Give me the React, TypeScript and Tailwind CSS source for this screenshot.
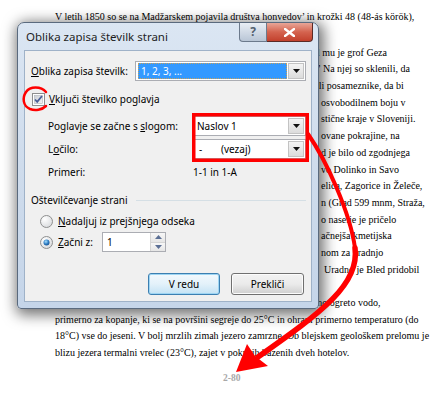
import React from "react";

const SERIF = "font-['Liberation_Serif','Times_New_Roman',serif]";
const UI = "font-['Noto_Sans','Segoe_UI',sans-serif]";

const TOP_LINE =
  "V letih 1850 so se na Madžarskem pojavila društva honvedov’ in krožki 48 (48-ás körök),";

const BODY_LINES: { text: string; pad: string }[] = [
  { text: "l mu je grof Geza", pad: "pl-[317px]" },
  { text: "” Na njej so sklenili, da", pad: "pl-[316px]" },
  { text: "ili posameznike, da bi", pad: "pl-[316px]" },
  { text: "osvobodilnem boju v", pad: "pl-[321px]" },
  { text: "stične kraje v Sloveniji.", pad: "pl-[321px]" },
  { text: "ovane pokrajine, na", pad: "pl-[321px]" },
  { text: "d je bilo od zgodnjega", pad: "pl-[321px]" },
  { text: "vo Dolinko in Savo", pad: "pl-[321px]" },
  { text: "elica, Zagorice in Želeče,", pad: "pl-[321px]" },
  { text: "n (Grad 599 mnm, Straža,", pad: "pl-[321px]" },
  { text: "o naselje je pričelo", pad: "pl-[321px]" },
  { text: "ačnejša kmetijska", pad: "pl-[321px]" },
  { text: "nom za gradnjo", pad: "pl-[321px]" },
  { text: "Uradno je Bled pridobil", pad: "pl-[324px]" },
  { text: "", pad: "pl-[55px]" },
  { text: "rno ogreto vodo,", pad: "pl-[314px]" },
  {
    text: "primerno za kopanje, ki se na površini segreje do 25°C in ohrani primerno temperaturo (do",
    pad: "pl-[55px]",
  },
  {
    text: "18°C) vse do jeseni. V bolj mrzlih zimah jezero zamrzne. Ob blejskem geološkem prelomu je",
    pad: "pl-[55px]",
  },
  {
    text: "blizu jezera termalni vrelec (23°C), zajet v pokritih bazenih dveh hotelov.",
    pad: "pl-[55px]",
  },
];

function DocumentPage() {
  return (
    <div className={`${SERIF} flex flex-col pt-[9px] text-[10px] leading-[16.7px] text-black`}>
      <div className="h-[16.7px] whitespace-nowrap pl-[55px]">{TOP_LINE}</div>
      <div className="mt-[19px] flex flex-col">
        {BODY_LINES.map((l, i) => (
          <div key={i} className={`h-[16.7px] whitespace-nowrap ${l.pad}`}>
            {l.text}
          </div>
        ))}
      </div>
      <div className="mt-[8px] pl-[223px] text-[9.5px] font-bold text-[#a8a8a8]">2-80</div>
    </div>
  );
}

function DropArrow() {
  return (
    <div className="m-[1px] flex w-[16px] items-center justify-center border border-[#c3c3c3] bg-linear-to-b from-[#f4f4f4] to-[#dcdcdc]">
      <svg width="7" height="4" viewBox="0 0 7 4">
        <path d="M0 0h7L3.5 4z" fill="#111" />
      </svg>
    </div>
  );
}

function Combo({ children, className = "" }: { children: React.ReactNode; className?: string }) {
  return (
    <div className={`flex h-[20px] border border-[#abadb3] bg-white ${className}`}>
      <div className="flex min-w-0 flex-1 items-center pl-[2px]">{children}</div>
      <DropArrow />
    </div>
  );
}

function Checkbox() {
  return (
    <svg width="13" height="13" viewBox="0 0 13 13">
      <defs>
        <linearGradient id="cb" x1="0" y1="0" x2="1" y2="1">
          <stop offset="0" stopColor="#cbcfd5" />
          <stop offset="1" stopColor="#f6f6f6" />
        </linearGradient>
      </defs>
      <rect x="0.5" y="0.5" width="12" height="12" fill="#fff" stroke="#8e8f8f" />
      <rect x="2.5" y="2.5" width="8" height="8" fill="url(#cb)" stroke="#b0b4b9" strokeWidth="0.6" />
      <path d="M3 6.5l2.2 2.3L10 3" fill="none" stroke="#4a5f97" strokeWidth="1.8" />
    </svg>
  );
}

function Radio({ on }: { on?: boolean }) {
  return (
    <svg width="13" height="13" viewBox="0 0 13 13">
      <defs>
        <radialGradient id="rb" cx="0.35" cy="0.3" r="0.8">
          <stop offset="0" stopColor="#ffffff" />
          <stop offset="1" stopColor="#d6d8db" />
        </radialGradient>
        <radialGradient id="rd" cx="0.4" cy="0.35" r="0.7">
          <stop offset="0" stopColor="#a6e0ff" />
          <stop offset="0.6" stopColor="#2d7bc2" />
          <stop offset="1" stopColor="#17508a" />
        </radialGradient>
      </defs>
      <circle cx="6.5" cy="6.5" r="6" fill="url(#rb)" stroke="#8e8f8f" />
      {on && <circle cx="6.5" cy="6.5" r="3" fill="url(#rd)" />}
    </svg>
  );
}

function Spinner() {
  return (
    <div className="flex h-[20px] w-[64px] border border-[#abadb3] bg-white">
      <div className="flex flex-1 items-center pl-[4px]">1</div>
      <div className="flex w-[15px] flex-col border-l border-[#d5d5d5]">
        <div className="flex flex-1 items-center justify-center border-b border-[#d5d5d5] bg-linear-to-b from-[#f7f7f7] to-[#e6e6e6]">
          <svg width="7" height="4" viewBox="0 0 7 4">
            <path d="M0 4h7L3.5 0z" fill="#5b6f95" />
          </svg>
        </div>
        <div className="flex flex-1 items-center justify-center bg-linear-to-b from-[#f7f7f7] to-[#e6e6e6]">
          <svg width="7" height="4" viewBox="0 0 7 4">
            <path d="M0 0h7L3.5 4z" fill="#5b6f95" />
          </svg>
        </div>
      </div>
    </div>
  );
}

function U({ children }: { children: React.ReactNode }) {
  return <span className="underline underline-offset-[1px]">{children}</span>;
}

function Dialog() {
  return (
    <div
      className={`${UI} absolute left-[17px] top-[22px] flex h-[287px] w-[302px] flex-col rounded-t-[7px] rounded-b-[4px] border border-[#5a6a7e] bg-linear-to-b from-[#dbe6f3] via-[#cfdcec] to-[#c5d5e9] px-[6px] pb-[6px] shadow-[2px_3px_14px_3px_rgba(0,0,0,0.55)]`}
    >
      <div className="flex h-[27px] shrink-0">
        <div className="flex items-center pl-[2px] pt-[1px] text-[11.5px] text-[#1e1e1e]">
          Oblika zapisa številk strani
        </div>
        <div className="ml-auto mr-[-1px] flex h-[19px]">
          <div className="flex w-[28px] items-center justify-center rounded-bl-[4px] border border-t-0 border-[#6c7a8c] bg-linear-to-b from-[#e9eef5] to-[#b9c6d6] text-[12px] font-bold text-[#52606f]">
            ?
          </div>
          <div className="flex w-[46px] items-center justify-center rounded-br-[4px] border border-l-0 border-t-0 border-[#5a2a26] bg-linear-to-b from-[#e8a597] via-[#d4634f] to-[#c2402c]">
            <svg width="11" height="9" viewBox="0 0 11 9">
              <path d="M1 1l9 7M10 1L1 8" stroke="#fff" strokeWidth="2.4" strokeLinecap="square" />
            </svg>
          </div>
        </div>
      </div>

      <div className="flex flex-1 flex-col border border-[#9fb2c8] bg-[#f0f0f0] pl-[6px] pr-[5px] text-[10px] text-black">
        <div className="mt-[10px] flex h-[20px] items-center">
          <div className="w-[104px]">
            <U>O</U>blika zapisa številk:
          </div>
          <Combo className="flex-1">
            <div className="flex h-[16px] flex-1 items-center border border-dotted border-[#c9a15a] bg-[#3399ff] pl-[2px] text-white">
              1, 2, 3, ...
            </div>
          </Combo>
        </div>

        <div className="mt-[10px] flex h-[16px] items-center gap-[4px] pl-[1px]">
          <Checkbox />
          <span>
            <U>V</U>ključi številko poglavja
          </span>
        </div>

        <div className="mt-[9px] flex h-[20px] items-center pl-[17px]">
          <div className="w-[146px]">
            Poglavje se začne s <U>s</U>logom:
          </div>
          <Combo className="flex-1">Naslov 1</Combo>
        </div>

        <div className="mt-[3px] flex h-[20px] items-center pl-[17px]">
          <div className="w-[146px]">
            L<U>o</U>čilo:
          </div>
          <Combo className="flex-1">
            <span className="w-[24px] pl-[2px]">-</span>
            <span>(vezaj)</span>
          </Combo>
        </div>

        <div className="mt-[6px] flex h-[14px] items-center pl-[17px]">
          <div className="w-[145px]">Primeri:</div>
          <div>1-1 in 1-A</div>
        </div>

        <div className="mt-[14px] flex h-[14px] items-center">
          <span>Oštevilčevanje strani</span>
          <div className="ml-[8px] h-px flex-1 bg-[#d5dfe5]" />
        </div>

        <div className="mt-[7px] flex h-[14px] items-center gap-[5px] pl-[9px]">
          <Radio />
          <span>
            <U>N</U>adaljuj iz prejšnjega odseka
          </span>
        </div>

        <div className="mt-[4px] flex h-[20px] items-center pl-[9px]">
          <Radio on />
          <span className="ml-[5px] w-[44px]">
            <U>Z</U>ačni z:
          </span>
          <Spinner />
        </div>

        <div className="mt-[21px] flex justify-end gap-[11px] pr-[2px]">
          <div className="flex h-[22px] w-[72px] items-center justify-center rounded-[3px] border border-[#3c7fb1] bg-linear-to-b from-[#f2f9fd] via-[#e3f1fa] to-[#c4e3f5] shadow-[inset_0_0_0_1px_#9ed5f3]">
            V redu
          </div>
          <div className="flex h-[22px] w-[73px] items-center justify-center rounded-[3px] border border-[#707070] bg-linear-to-b from-[#f2f2f2] via-[#ebebeb] to-[#cfcfcf] shadow-[inset_0_0_0_1px_#fcfcfc]">
            Prekliči
          </div>
        </div>
      </div>
    </div>
  );
}

function Annotations() {
  return (
    <svg className="pointer-events-none absolute left-0 top-0" width="436" height="398" viewBox="0 0 436 398">
      <path
        d="M46 92 C41 86 30 86 26 92 C22 98 23 106 30 109 C35 111 42 110 46 106"
        fill="none"
        stroke="#ff0000"
        strokeWidth="2.5"
        strokeLinecap="round"
      />
      <rect x="193.75" y="114.75" width="113.5" height="45.5" fill="none" stroke="#ff0000" strokeWidth="3.5" />
      <path
        d="M308 134 C326 160 350 212 355 248"
        fill="none"
        stroke="#ff0000"
        strokeWidth="4"
        strokeLinecap="round"
      />
      <path
        d="M355 248 C360 284 322 312 258 357"
        fill="none"
        stroke="#ff0000"
        strokeWidth="5.5"
        strokeLinecap="round"
      />
      <path d="M236 372 L247 344 L255 356 L268 366 Z" fill="#ff0000" />
    </svg>
  );
}

export default function App() {
  return (
    <div className="relative h-[398px] w-[436px] overflow-hidden bg-white">
      <DocumentPage />
      <Dialog />
      <Annotations />
    </div>
  );
}
